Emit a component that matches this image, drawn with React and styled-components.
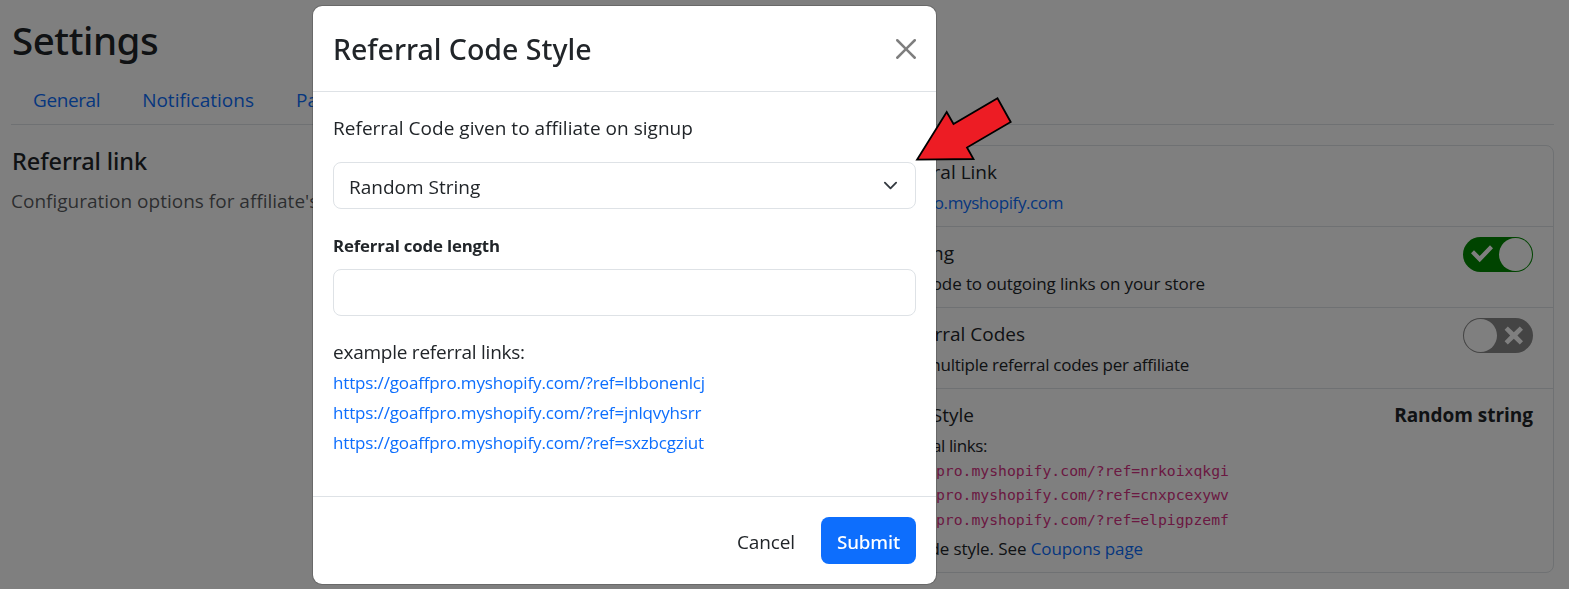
import React from "react";
import styled, { createGlobalStyle } from "styled-components";

const GlobalStyle = createGlobalStyle`
  *, *::before, *::after { box-sizing: border-box; }
  html, body { margin: 0; height: 589px; overflow: hidden; }
  body {
    background: #fff;
    color: #212529;
    font-family: "Open Sans", "Noto Sans", sans-serif;
    font-size: 19px;
    line-height: 30px;
  }
`;

const Page = styled.main`
  display: flex;
  flex-direction: column;
  width: 1554px;
  height: 589px;
  padding: 16px 0 0 11px;
`;

const PageTitle = styled.h1`
  margin: 0 0 11px 1px;
  font: 500 38.5px/48px "Noto Sans", sans-serif;
  letter-spacing: -0.45px;
`;

const Tabs = styled.nav`
  display: flex;
  height: 50px;
  padding-left: 1px;
  border-bottom: 1px solid #dee2e6;
`;

const Tab = styled.a`
  padding: 10px 21px 0;
  color: #0d6efd;
  letter-spacing: ${(p) => p.$tracking || "0"};
  white-space: nowrap;
`;

const Columns = styled.div`
  display: grid;
  grid-template-columns: 771px 752px;
  column-gap: 20px;
  padding-top: 20px;
`;

const SectionTitle = styled.h2`
  margin: 1px 0 10px 1px;
  font: 500 23.5px/30px "Noto Sans", sans-serif;
  letter-spacing: -0.08px;
`;

const SectionText = styled.p`
  margin: 0;
  color: rgba(33, 37, 41, 0.75);
`;

const List = styled.section`
  border: 1px solid #dee2e6;
  border-radius: 8px;
`;

const ListItem = styled.div`
  display: flex;
  justify-content: space-between;
  padding: 10px 20px;

  & + & {
    border-top: 1px solid #dee2e6;
  }
`;

const ItemBody = styled.div`
  display: flex;
  flex-direction: column;
`;

const ItemLine = styled.div`
  display: flex;
  justify-content: flex-end;
  width: ${(p) => p.$width}px;
  height: 30px;
  padding-top: 1px;
  white-space: pre;
`;

const ItemNote = styled(ItemLine)`
  padding-top: 2px;
  font-size: 17px;
  letter-spacing: ${(p) => p.$tracking || "-0.2px"};
`;

const CodeLine = styled.code`
  display: flex;
  justify-content: flex-end;
  width: 406px;
  height: 24.4px;
  color: #d63384;
  font: 14.75px/24.4px "DejaVu Sans Mono", monospace;
  white-space: nowrap;
`;

const Link = styled.a`
  color: #0d6efd;
`;

const ItemValue = styled.strong`
  padding-top: 1px;
  letter-spacing: -0.03px;
`;

const Switch = styled.span`
  display: flex;
  justify-content: ${(p) => (p.$on ? "flex-end" : "flex-start")};
  width: 70px;
  height: 35px;
  padding: 1px;
  border-radius: 18px;
  background: ${(p) => (p.$on ? "#008800" : "#888888")};
`;

const Knob = styled.span`
  width: 33px;
  height: 33px;
  border-radius: 50%;
  background: #fff;
`;

const SwitchMark = styled.svg`
  width: 35px;
  height: 33px;
  fill: #fff;
`;

const Backdrop = styled.div`
  position: fixed;
  inset: 0;
  background: rgba(0, 0, 0, 0.5);
  padding: 5px 0 0 312px;
`;

const Dialog = styled.div`
  display: flex;
  flex-direction: column;
  width: 625px;
  height: 580px;
  border: 1px solid rgba(0, 0, 0, 0.175);
  border-radius: 10px;
  background: #fff;
  background-clip: padding-box;
`;

const DialogHeader = styled.header`
  display: flex;
  align-items: center;
  justify-content: space-between;
  height: 86px;
  padding: 0 20px;
  border-bottom: 1px solid #dee2e6;
`;

const DialogTitle = styled.h3`
  margin: 0;
  font: 500 28.5px/38px "Noto Sans", sans-serif;
`;

const CloseIcon = styled.svg`
  width: 20px;
  height: 20px;
  fill: #000;
  opacity: 0.5;
`;

const DialogBody = styled.div`
  flex: 1;
  padding: 21px 20px 0;
`;

const Text = styled.p`
  margin: 0;
  letter-spacing: ${(p) => p.$tracking || "0.03px"};
`;

const Select = styled.div`
  display: flex;
  align-items: center;
  justify-content: space-between;
  height: 47px;
  margin: 19px 0 22px;
  padding: 2px 17px 0 15px;
  border: 1px solid #dee2e6;
  border-radius: 8px;
`;

const Chevron = styled.svg`
  width: 15px;
  height: 15px;
  margin-top: -2px;
  fill: none;
  stroke: #343a40;
  stroke-width: 2;
  stroke-linecap: round;
  stroke-linejoin: round;
`;

const Label = styled.label`
  display: block;
  font-size: 16.8px;
  font-weight: 700;
  letter-spacing: -0.16px;
`;

const Input = styled.input`
  display: block;
  width: 100%;
  height: 47px;
  margin: 8px 0 21px;
  border: 1px solid #dee2e6;
  border-radius: 8px;
  background: #fff;
`;

const Examples = styled.div`
  display: flex;
  flex-direction: column;
  padding-top: 1px;
`;

const ExampleLink = styled.a`
  color: #0d6efd;
  font-size: 17px;
  letter-spacing: -0.15px;
`;

const DialogFooter = styled.footer`
  display: flex;
  justify-content: flex-end;
  gap: 10px;
  height: 88px;
  padding: 20px;
  border-top: 1px solid #dee2e6;
`;

const Button = styled.button`
  height: 47px;
  padding: 2px 0 0;
  width: 90px;
  border: 0;
  border-radius: 8px;
  background: transparent;
  color: #212529;
  font: inherit;
  letter-spacing: -0.1px;
`;

const PrimaryButton = styled(Button)`
  width: 95px;
  background: #0d6efd;
  color: #fff;
  font: 500 18.8px/30px "Noto Sans", sans-serif;
  letter-spacing: -0.15px;
`;

const Arrow = styled.svg`
  position: fixed;
  left: 910px;
  top: 90px;
  width: 110px;
  height: 80px;
  fill: #ed1c24;
  stroke: #000;
  stroke-width: 1.8;
`;

const examples = ["lbbonenlcj", "jnlqvyhsrr", "sxzbcgziut"];
const codes = ["nrkoixqkgi", "cnxpcexywv", "elpigpzemf"];

const Toggle = ({ on }) => (
  <Switch $on={on}>
    {!on && <Knob />}
    <SwitchMark viewBox="0 0 35 33">
      {on ? (
        <path d="M7 15.3 10 12.3 15.7 17.9 26 7.3 29 10.3 15.7 24.3Z" />
      ) : (
        <path d="M10.8 7.6 16.8 13.2 22.8 7.6 26 10.8 20.4 16.5 26 22.2 22.8 25.4 16.8 19.8 10.8 25.4 7.6 22.2 13.2 16.5 7.6 10.8Z" />
      )}
    </SwitchMark>
    {on && <Knob />}
  </Switch>
);

export default function App() {
  return (
    <>
      <GlobalStyle />
      <Page>
        <PageTitle>Settings</PageTitle>
        <Tabs>
          <Tab $tracking="-0.4px">General</Tab>
          <Tab>Notifications</Tab>
          <Tab>Payments</Tab>
        </Tabs>
        <Columns>
          <div>
            <SectionTitle>Referral link</SectionTitle>
            <SectionText>Configuration options for affiliate's referral links</SectionText>
          </div>
          <List>
            <ListItem>
              <ItemBody>
                <ItemLine $width={174}>Default Referral Link</ItemLine>
                <ItemNote $width={240} $tracking="-0.4px">
                  <Link>https://goaffpro.myshopify.com</Link>
                </ItemNote>
              </ItemBody>
            </ListItem>
            <ListItem>
              <ItemBody>
                <ItemLine $width={131}>Smart Linking</ItemLine>
                <ItemNote $width={382} $tracking="-0.1px">
                  Add referral code to outgoing links on your store
                </ItemNote>
              </ItemBody>
              <Toggle on />
            </ListItem>
            <ListItem>
              <ItemBody>
                <ItemLine $width={202}>Multiple Referral Codes</ItemLine>
                <ItemNote $width={366} $tracking="-0.28px">
                  Allow multiple referral codes per affiliate
                </ItemNote>
              </ItemBody>
              <Toggle />
            </ListItem>
            <ListItem>
              <ItemBody>
                <ItemLine $width={151}>Referral Code Style</ItemLine>
                <ItemNote $width={164} $tracking="-0.4px">Example referral links:</ItemNote>
                {codes.map((code) => (
                  <CodeLine key={code}>https://goaffpro.myshopify.com/?ref={code}</CodeLine>
                ))}
                <ItemNote $width={320} $tracking="-0.1px">
                  Or set coupon code style. See <Link>Coupons page</Link>
                </ItemNote>
              </ItemBody>
              <ItemValue>Random string</ItemValue>
            </ListItem>
          </List>
        </Columns>
      </Page>
      <Backdrop>
        <Dialog role="dialog">
          <DialogHeader>
            <DialogTitle>Referral Code Style</DialogTitle>
            <CloseIcon viewBox="0 0 16 16">
              <path d="M.293.293a1 1 0 0 1 1.414 0L8 6.586 14.293.293a1 1 0 1 1 1.414 1.414L9.414 8l6.293 6.293a1 1 0 0 1-1.414 1.414L8 9.414l-6.293 6.293a1 1 0 0 1-1.414-1.414L6.586 8 .293 1.707a1 1 0 0 1 0-1.414z" />
            </CloseIcon>
          </DialogHeader>
          <DialogBody>
            <Text>Referral Code given to affiliate on signup</Text>
            <Select>
              Random String
              <Chevron viewBox="0 0 16 16">
                <path d="m2 5 6 6 6-6" />
              </Chevron>
            </Select>
            <Label>Referral code length</Label>
            <Input />
            <Text $tracking="-0.24px">example referral links:</Text>
            <Examples>
              {examples.map((code) => (
                <ExampleLink key={code}>https://goaffpro.myshopify.com/?ref={code}</ExampleLink>
              ))}
            </Examples>
          </DialogBody>
          <DialogFooter>
            <Button>Cancel</Button>
            <PrimaryButton>Submit</PrimaryButton>
          </DialogFooter>
        </Dialog>
      </Backdrop>
      <Arrow viewBox="0 0 110 80">
        <path d="M7 69.7 36.7 22 43.5 34 87.5 8.3 100.7 32 57 57.5 63.5 69Z" />
      </Arrow>
    </>
  );
}
